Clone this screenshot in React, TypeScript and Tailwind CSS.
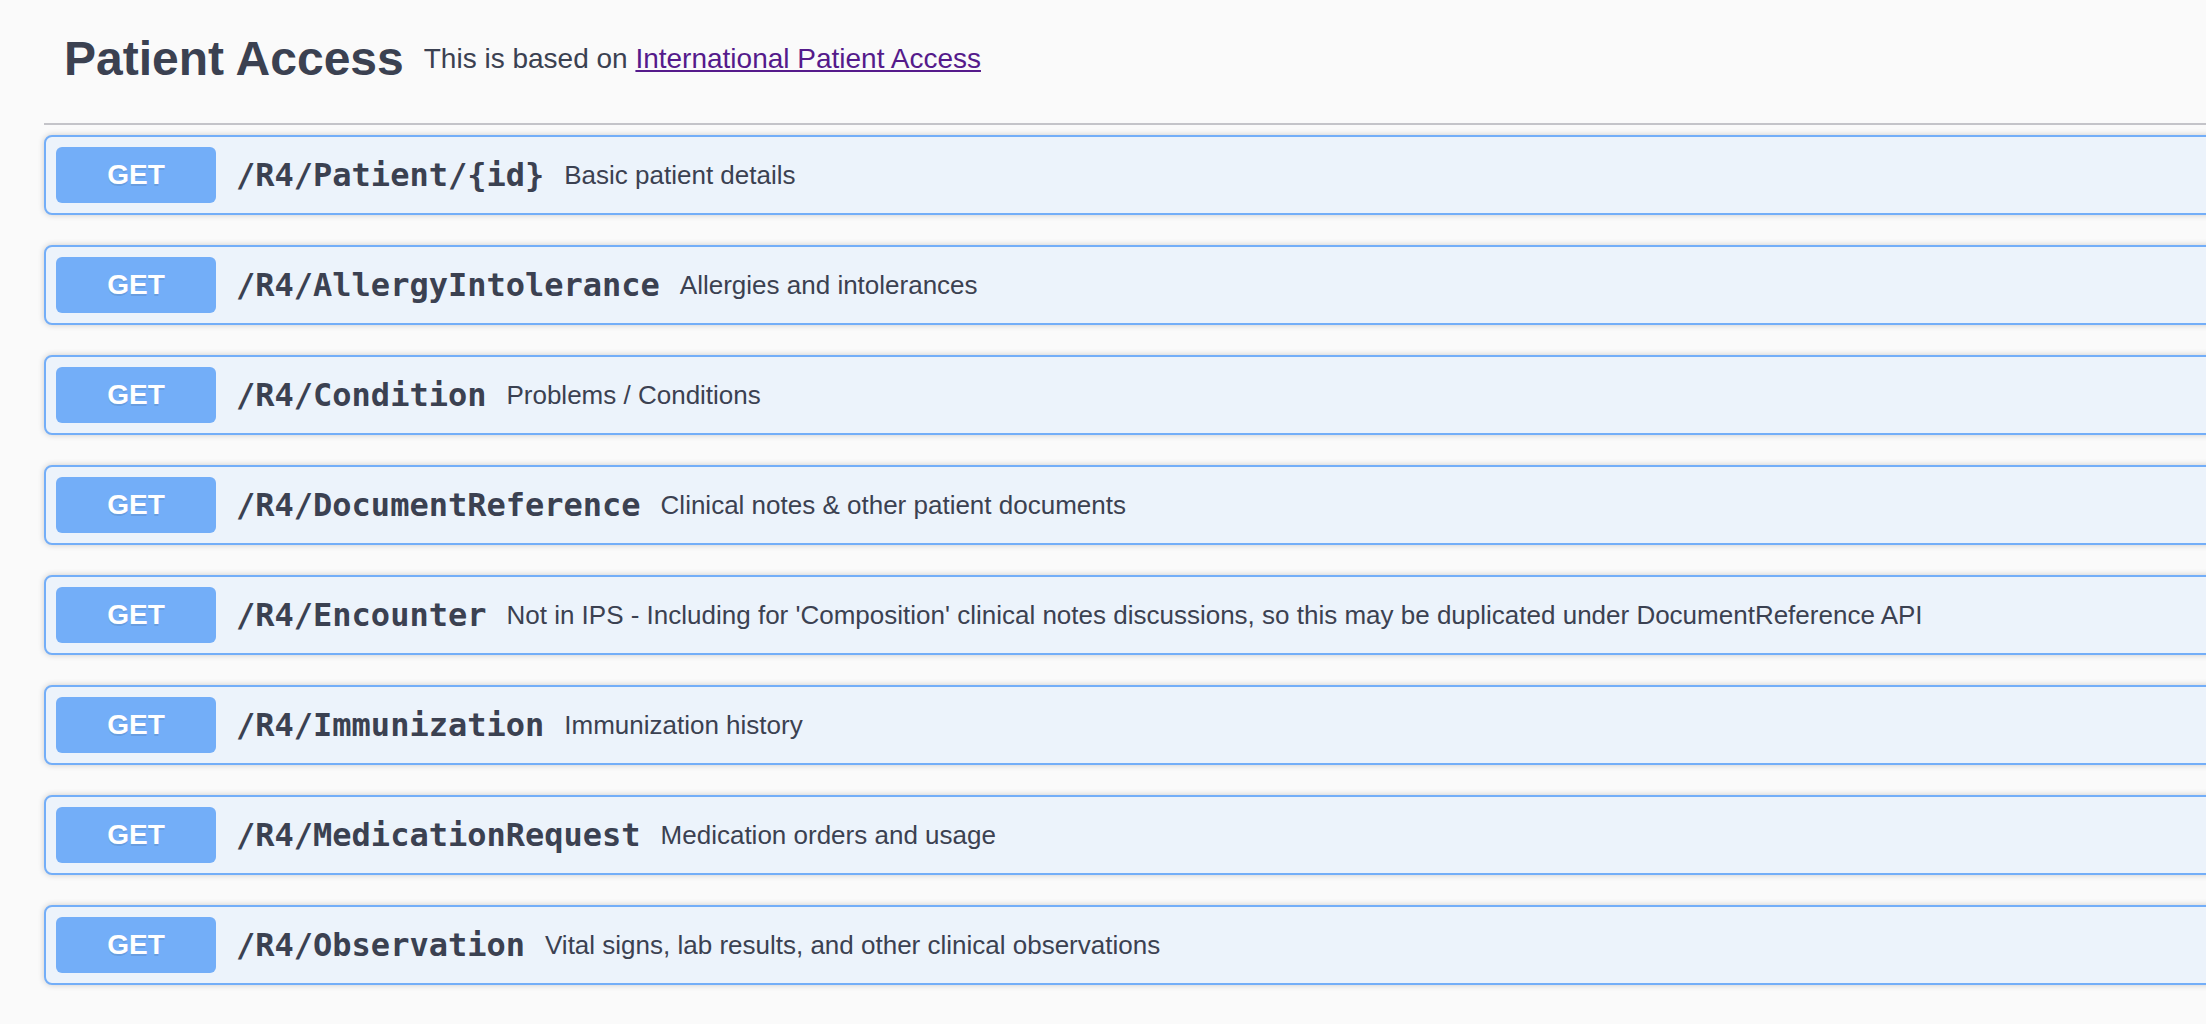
const endpoints = [
  { path: '/R4/Patient/{id}', summary: 'Basic patient details' },
  { path: '/R4/AllergyIntolerance', summary: 'Allergies and intolerances' },
  { path: '/R4/Condition', summary: 'Problems / Conditions' },
  { path: '/R4/DocumentReference', summary: 'Clinical notes & other patient documents' },
  {
    path: '/R4/Encounter',
    summary:
      "Not in IPS - Including for 'Composition' clinical notes discussions, so this may be duplicated under DocumentReference API",
  },
  { path: '/R4/Immunization', summary: 'Immunization history' },
  { path: '/R4/MedicationRequest', summary: 'Medication orders and usage' },
  { path: '/R4/Observation', summary: 'Vital signs, lab results, and other clinical observations' },
]

function OperationRow({ path, summary }: { path: string; summary: string }) {
  return (
    <div className="mb-[30px] flex h-[80px] items-center rounded-[8px] border-2 border-[#73aef8] bg-[#ecf3fb] px-[10px] shadow-[0_0_6px_rgba(0,0,0,0.19)]">
      <span className="flex h-[56px] w-[160px] shrink-0 items-center justify-center rounded-[6px] bg-[#73aef8] text-[28px] font-bold text-white [text-shadow:0_2px_0_rgba(0,0,0,0.1)]">
        GET
      </span>
      <span className="px-[20px] font-['DejaVu_Sans_Mono',monospace] text-[32px] font-bold text-[#3b4151]">
        {path}
      </span>
      <span className="text-[26px] text-[#3b4151]">{summary}</span>
    </div>
  )
}

export default function App() {
  return (
    <div className="min-h-screen w-full overflow-hidden bg-[#fafafa] font-['Liberation_Sans',Arial,sans-serif]">
      <div className="w-[2320px] pl-[44px]">
        <div className="mb-[10px] flex items-center border-b-2 border-[#c4c4c9] pt-[31px] pb-[37px] pl-[20px]">
          <h3 className="text-[48px] leading-[55px] font-bold text-[#3b4151]">Patient Access</h3>
          <span className="px-[20px] text-[28px] text-[#3b4151]">
            This is based on{' '}
            <a href="#" className="text-[#551a8b] underline">
              International Patient Access
            </a>
          </span>
        </div>
        {endpoints.map((e) => (
          <OperationRow key={e.path} path={e.path} summary={e.summary} />
        ))}
      </div>
    </div>
  )
}
